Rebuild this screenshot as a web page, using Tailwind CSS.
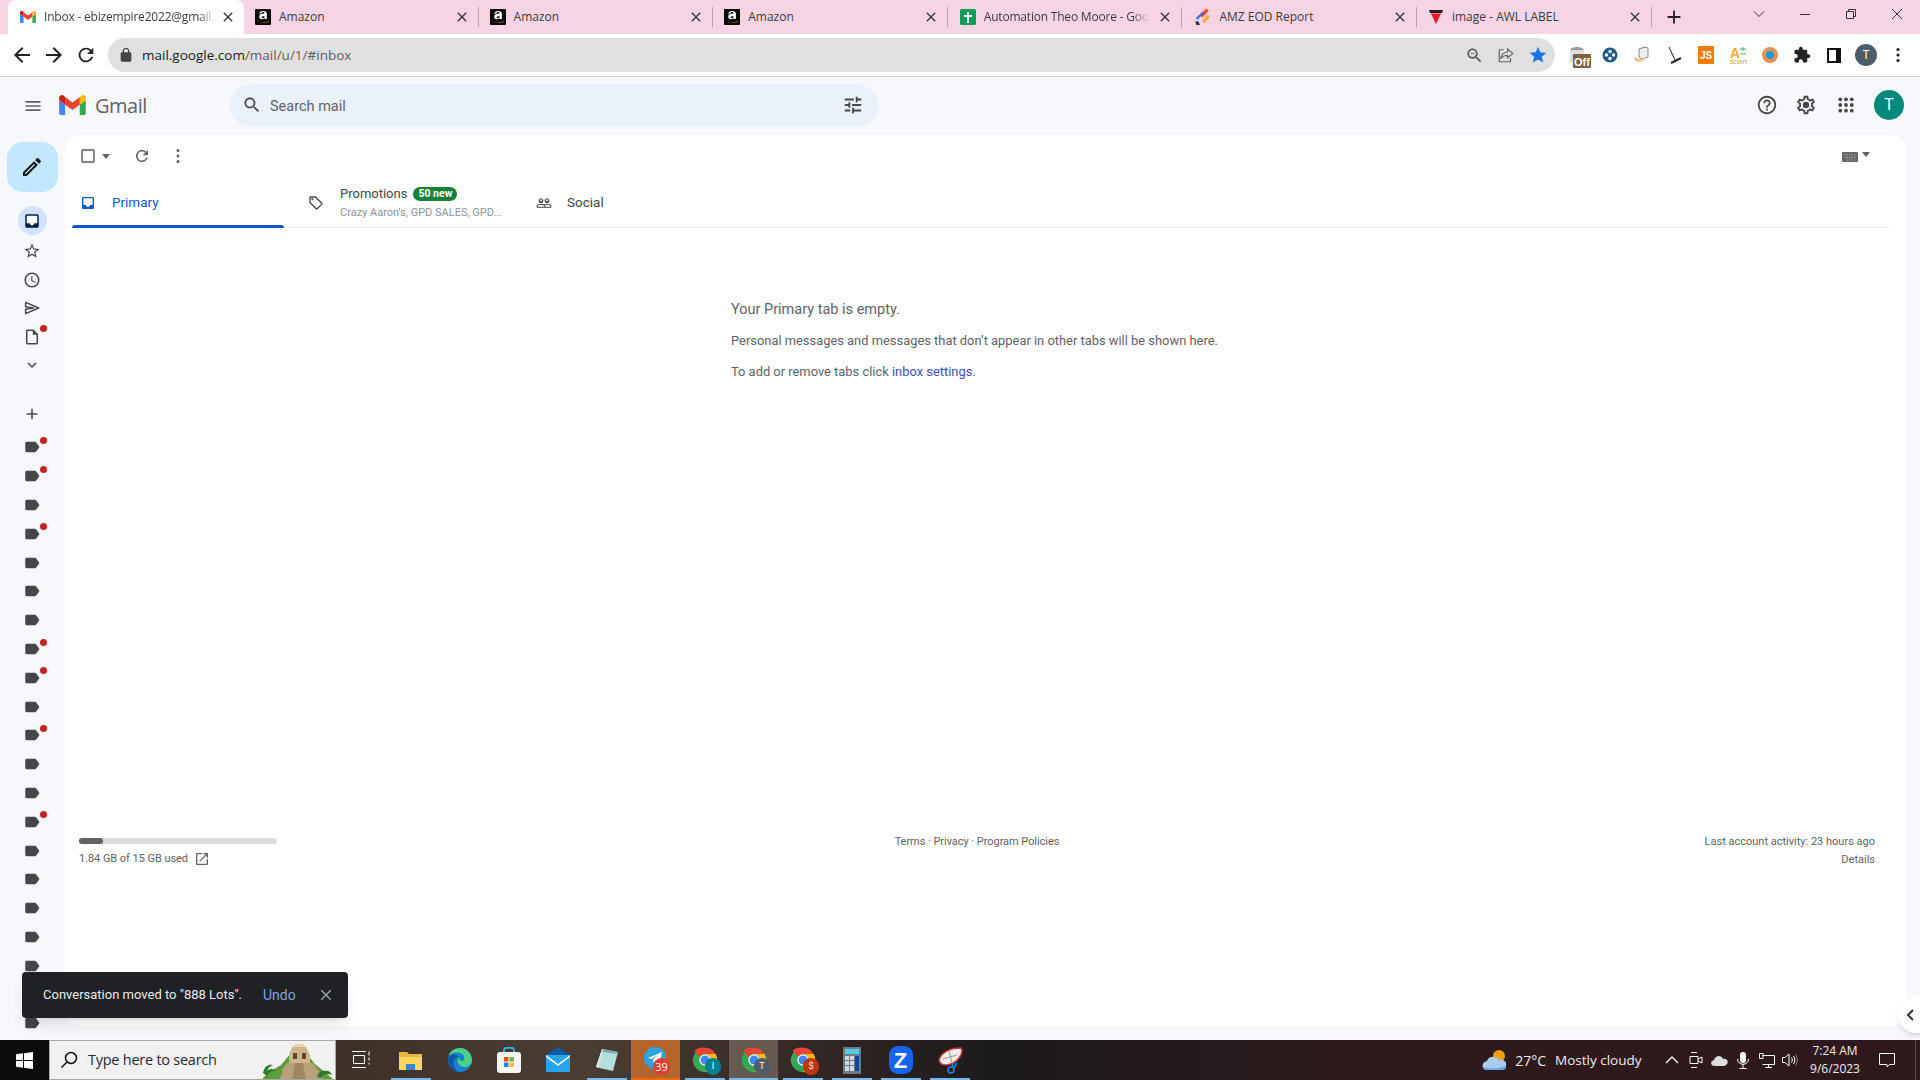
<!DOCTYPE html>
<html lang="en">
<head>
  <meta charset="UTF-8" />
  <title>Inbox - Gmail</title>
  <script src="https://cdn.jsdelivr.net/npm/@tailwindcss/browser@4"></script>
</head>
<body class="w-[1920px] h-[1080px] overflow-hidden flex flex-col relative bg-white font-['Roboto',sans-serif]">

  <!-- shared icons -->
  <svg class="hidden">
    <symbol id="label" viewBox="0 0 24 24"><path d="M17.63 5.84C17.27 5.33 16.67 5 16 5L5 5.01C3.9 5.01 3 5.9 3 7v10c0 1.1.9 1.99 2 1.99L16 19c.67 0 1.27-.33 1.63-.84L22 12l-4.37-6.16z"/></symbol>
    <symbol id="close" viewBox="0 0 24 24"><path d="M19 6.41L17.59 5 12 10.59 6.41 5 5 6.41 10.59 12 5 17.59 6.41 19 12 13.41 17.59 19 19 17.59 13.41 12z"/></symbol>
    <symbol id="amazon" viewBox="0 0 16 16"><rect width="16" height="16" rx="1" fill="#0b0b0b"/><g transform="translate(-2.2 -3.2) scale(1.28)"><path d="M5 6.2c.3-1.5 1.3-2.2 3-2.2 2 0 3 .9 3 2.4v3.9h-1.7l-.2-.8c-.5.7-1.2 1-2 1-1.300 0-2.100-.8-2.100-2 0-1.500 1.200-2.300 4.100-2.400v-.3c0-.6-.4-1-1.100-1-.6 0-1 .3-1.200 1zM9.100 7.900c-1.500.1-2.200.5-2.200 1.100 0 .5.300.7.800.7.800 0 1.400-.5 1.400-1.300z" fill="#fff"/></g><path d="M2.500 12.300c3.500 2 7.500 2 11-.2l-.3 1.900-.6-.9c-3.200 1.500-6.800 1.100-10.100-.8z" fill="#f90"/></symbol>
    <symbol id="chrome" viewBox="0 0 32 32"><circle cx="16" cy="16" r="15" fill="#34a853"/><path d="M16 1a15 15 0 0 1 13 7.500H16a7.500 7.500 0 0 0-6.500 3.750L3 4.800A15 15 0 0 1 16 1z" fill="#ea4335"/><path d="M29 8.500A15 15 0 0 1 16 31l6.500-11.250A7.500 7.500 0 0 0 16 8.500z" fill="#fbbc04"/><circle cx="16" cy="16" r="7" fill="#fff"/><circle cx="16" cy="16" r="5.500" fill="#4285f4"/></symbol>
  </svg>

  <!-- Tab strip -->
  <div class="h-[34px] shrink-0 bg-[#f6d4e4] flex items-stretch text-[12px] text-[#3c3c3c] font-['Open_Sans',sans-serif]">
    <div class="w-[236px] ml-2 bg-white rounded-t-lg flex items-center pl-3 pr-2 gap-[8px]">
      <svg class="w-4 h-4 shrink-0" viewBox="0 0 24 18"><path fill="#4285f4" d="M1.600 18H5.400V8.700L0 4.650V16.400C0 17.300.7 18 1.600 18z"/><path fill="#34a853" d="M18.500 18h3.800c.9 0 1.600-.7 1.600-1.600V4.650l-5.400 4.050"/><path fill="#fbbc04" d="M18.500 1.700v7L24 4.650V2.500C24 .5 21.700-.65 20.100.55"/><path fill="#ea4335" d="M5.400 8.700V1.700L12 6.650l6.500-4.950v7L12 13.600"/><path fill="#c5221f" d="M0 2.500v2.150L5.400 8.700v-7L3.900.55C2.300-.65 0 .5 0 2.500z"/></svg>
      <span class="flex-1 overflow-hidden whitespace-nowrap tracking-[-0.2px] mr-[-4px] mask-r-from-90%">Inbox - ebizempire2022@gmail.com</span>
      <svg class="w-4 h-4 shrink-0 fill-[#333]"><use href="#close"/></svg>
    </div>
    <div class="w-[234.600px] flex items-center pl-[11px] pr-2 gap-[8px] border-r border-[#b8a2ae] my-[7px]">
      <svg class="w-4 h-4 shrink-0"><use href="#amazon"/></svg><span class="flex-1 whitespace-nowrap">Amazon</span><svg class="w-4 h-4 shrink-0 fill-[#333]"><use href="#close"/></svg>
    </div>
    <div class="w-[234.600px] flex items-center pl-[11px] pr-2 gap-[8px] border-r border-[#b8a2ae] my-[7px]">
      <svg class="w-4 h-4 shrink-0"><use href="#amazon"/></svg><span class="flex-1 whitespace-nowrap">Amazon</span><svg class="w-4 h-4 shrink-0 fill-[#333]"><use href="#close"/></svg>
    </div>
    <div class="w-[234.600px] flex items-center pl-[11px] pr-2 gap-[8px] border-r border-[#b8a2ae] my-[7px]">
      <svg class="w-4 h-4 shrink-0"><use href="#amazon"/></svg><span class="flex-1 whitespace-nowrap">Amazon</span><svg class="w-4 h-4 shrink-0 fill-[#333]"><use href="#close"/></svg>
    </div>
    <div class="w-[234.600px] flex items-center pl-[12px] pr-2 gap-[8px] border-r border-[#b8a2ae] my-[7px]">
      <svg class="w-4 h-4 shrink-0" viewBox="0 0 16 16"><rect width="16" height="16" rx="1.500" fill="#0f9d58"/><path d="M7 3h2v3h3v2H9v6H7V8H4V6h3z" fill="#fff"/></svg>
      <span class="flex-1 overflow-hidden whitespace-nowrap tracking-[-0.2px] mask-r-from-90%">Automation Theo Moore - Google Sheets</span><svg class="w-4 h-4 shrink-0 fill-[#333]"><use href="#close"/></svg>
    </div>
    <div class="w-[234.600px] flex items-center pl-[11px] pr-2 gap-[8px] border-r border-[#b8a2ae] my-[7px]">
      <svg class="w-[18px] h-[18px] shrink-0" viewBox="0 0 16 16"><path d="M9 3l3-2.500 2 2-5.500 6-2-2z" fill="#f4511e"/><path d="M2.500 9l6-6 1.500 1.500-6 6z" fill="#3f6fe0"/><path d="M8 11l5-5 2 2-5 5.500z" fill="#fbb03b"/><path d="M2 12h3l1 3H3z" fill="#1b2a5c"/></svg>
      <span class="flex-1 whitespace-nowrap">AMZ EOD Report</span><svg class="w-4 h-4 shrink-0 fill-[#333]"><use href="#close"/></svg>
    </div>
    <div class="w-[234.600px] flex items-center pl-[11px] pr-2 gap-[8px] border-r border-[#b8a2ae] my-[7px]">
      <svg class="w-4 h-4 shrink-0" viewBox="0 0 16 16"><path d="M1 1h14l-1 3H2z" fill="#222"/><path d="M3 4.500h10L8 15z" fill="#e31b23"/></svg>
      <span class="flex-1 whitespace-nowrap">image - AWL LABEL</span><svg class="w-4 h-4 shrink-0 fill-[#333]"><use href="#close"/></svg>
    </div>
    <div class="w-[44px] flex items-center justify-center">
      <svg class="w-[22px] h-[22px] fill-[#222]" viewBox="0 0 24 24"><path d="M19 13h-6v6h-2v-6H5v-2h6V5h2v6h6v2z"/></svg>
    </div>
    <!-- window controls -->
    <div class="ml-auto flex items-start text-[#333]">
      <div class="w-[46px] h-[28px] flex items-center justify-center"><svg class="w-3 h-3 stroke-[#333] fill-none" viewBox="0 0 12 12"><path d="M1 3.500l5 5 5-5"/></svg></div>
      <div class="w-[46px] h-[28px] flex items-center justify-center"><svg class="w-3 h-3 stroke-[#333] fill-none" viewBox="0 0 12 12"><path d="M1 6.500h10"/></svg></div>
      <div class="w-[46px] h-[28px] flex items-center justify-center"><svg class="w-3 h-3 stroke-[#333] fill-none" viewBox="0 0 12 12"><path d="M1.500 3.500h7v7h-7zM3.500 3.500v-2h7v7h-2"/></svg></div>
      <div class="w-[46px] h-[28px] flex items-center justify-center"><svg class="w-3 h-3 stroke-[#333] fill-none" viewBox="0 0 12 12"><path d="M1 1l10 10M11 1L1 11"/></svg></div>
    </div>
  </div>

  <!-- Address bar -->
  <div class="h-[43px] shrink-0 bg-white border-b border-[#d0d0d0] flex items-start pt-[4px] pl-[6px]">
    <div class="w-8 h-[34px] flex items-center justify-center"><svg class="w-6 h-6 fill-[#222]" viewBox="0 0 24 24"><path d="M20 11H7.830l5.590-5.590L12 4l-8 8 8 8 1.410-1.410L7.830 13H20v-2z"/></svg></div>
    <div class="w-8 h-[34px] flex items-center justify-center"><svg class="w-6 h-6 fill-[#222]" viewBox="0 0 24 24"><path d="M12 4l-1.410 1.410L16.170 11H4v2h12.170l-5.580 5.590L12 20l8-8z"/></svg></div>
    <div class="w-8 h-[34px] flex items-center justify-center"><svg class="w-[22px] h-[22px] fill-[#222]" viewBox="0 0 24 24"><path d="M17.650 6.350C16.200 4.900 14.210 4 12 4c-4.420 0-7.990 3.580-7.990 8s3.570 8 7.990 8c3.730 0 6.840-2.550 7.730-6h-2.080c-.82 2.330-3.040 4-5.650 4-3.310 0-6-2.690-6-6s2.690-6 6-6c1.660 0 3.140.69 4.220 1.780L13 11h7V4l-2.350 2.350z"/></svg></div>
    <div class="w-[1447px] ml-[6px] h-[34px] rounded-full bg-[#e0e0e0] flex items-center pl-[10px] pr-[1px] font-['Open_Sans',sans-serif]">
      <svg class="w-4 h-4 fill-[#444]" viewBox="0 0 24 24"><path d="M18 8h-1V6c0-2.760-2.240-5-5-5S7 3.240 7 6v2H6c-1.100 0-2 .9-2 2v10c0 1.100.9 2 2 2h12c1.100 0 2-.9 2-2V10c0-1.100-.9-2-2-2zM9 6c0-1.660 1.340-3 3-3s3 1.340 3 3v2H9V6z"/></svg>
      <span class="ml-2 text-[13.500px] text-[#5f5f5f]"><span class="text-[#222]">mail.google.com</span>/mail/u/1/#inbox</span>
      <div class="ml-auto flex">
        <div class="w-8 h-[34px] flex items-center justify-center"><svg class="w-[19px] h-[19px] fill-[#555]" viewBox="0 0 24 24"><path d="M15.500 14h-.79l-.28-.27C15.410 12.590 16 11.110 16 9.500 16 5.910 13.090 3 9.500 3S3 5.910 3 9.500 5.910 16 9.500 16c1.610 0 3.090-.59 4.230-1.570l.27.28v.79l5 4.990L20.490 19l-4.990-5zm-6 0C7.010 14 5 11.990 5 9.500S7.010 5 9.500 5 14 7.010 14 9.500 11.990 14 9.500 14zM7 9h5v1H7z"/></svg></div>
        <div class="w-8 h-[34px] flex items-center justify-center"><svg class="w-[18px] h-[18px] fill-none stroke-[#666] stroke-[1.600]" viewBox="0 0 24 24"><path d="M14 4l7 6-7 6v-3.500c-4 0-7 1.500-9 4.500 .5-5 3.500-8.500 9-9zM9 5H3v16h15v-5"/></svg></div>
        <div class="w-8 h-[34px] flex items-center justify-center"><svg class="w-[20px] h-[20px] fill-[#1a73e8]" viewBox="0 0 24 24"><path d="M12 17.270L18.180 21l-1.640-7.030L22 9.240l-7.190-.61L12 2 9.190 8.630 2 9.240l5.460 4.730L5.820 21z"/></svg></div>
      </div>
    </div>
    <!-- extensions -->
    <div class="w-[29px] h-[34px] ml-[10px] flex items-center justify-center relative">
      <svg class="w-[22px] h-[24px] mt-[6px]" viewBox="0 0 22 24"><ellipse cx="8" cy="4" rx="7" ry="3" fill="#999"/><path d="M1 4h14v12H1z" fill="#ddd"/><rect x="4" y="8" width="18" height="14" rx="1" fill="#7b6245"/><text x="13" y="19.500" text-anchor="middle" font-size="11" font-weight="700" fill="#fff" font-family="Liberation Sans">Off</text></svg>
    </div>
    <div class="w-8 h-[34px] flex items-center justify-center"><svg class="w-4 h-4" viewBox="0 0 16 16"><circle cx="8" cy="8" r="7.500" fill="#1d5a8c"/><circle cx="8" cy="4.500" r="1.700" fill="#fff"/><circle cx="8" cy="11.500" r="1.700" fill="#fff"/><circle cx="4.500" cy="8" r="1.700" fill="#fff"/><circle cx="11.500" cy="8" r="1.700" fill="#fff"/></svg></div>
    <div class="w-8 h-[34px] flex items-center justify-center"><svg class="w-[18px] h-[18px]" viewBox="0 0 18 18"><path d="M6 3l6-2 3 1v9l-6 2-3-2z" fill="#eee" stroke="#888"/><path d="M1 12c2-1 4 0 6 1l5-1c-1 3-4 4-7 4-2 0-3-1-4-4z" fill="#f2c58f"/></svg></div>
    <div class="w-8 h-[34px] flex items-center justify-center"><svg class="w-[18px] h-[18px] stroke-[#222] fill-none" viewBox="0 0 18 18"><path d="M4 1l6 13" stroke-width="1"/><path d="M6 17l10-5" stroke-width="2"/></svg></div>
    <div class="w-8 h-[34px] flex items-center justify-center"><div class="w-4 h-[18px] bg-[#f57c00] text-white text-[10px] font-bold flex items-center justify-center font-['Liberation_Sans',sans-serif]">JS</div></div>
    <div class="w-8 h-[34px] flex items-center justify-center"><svg class="w-[17px] h-[18px]" viewBox="0 0 17 18"><text x="0" y="12" font-size="14" font-weight="700" fill="#f9a825" font-family="Liberation Sans">A</text><path d="M10 3h6M13 1v4M10 8h6" stroke="#4caf50" stroke-width="1"/><text x="0" y="17.500" font-size="5" font-weight="700" fill="#f9a825" font-family="Liberation Sans">SCOUT</text></svg></div>
    <div class="w-8 h-[34px] flex items-center justify-center"><svg class="w-4 h-4" viewBox="0 0 16 16"><circle cx="8" cy="8" r="8" fill="#e8914f"/><circle cx="8" cy="8" r="4" fill="#1e9bd7"/></svg></div>
    <div class="w-8 h-[34px] flex items-center justify-center"><svg class="w-[18px] h-[18px] fill-[#222]" viewBox="0 0 24 24"><path d="M20.500 11H19V7c0-1.100-.9-2-2-2h-4V3.500C13 2.120 11.880 1 10.500 1S8 2.120 8 3.500V5H4c-1.100 0-1.990.9-1.990 2v3.800H3.500c1.490 0 2.700 1.210 2.700 2.700s-1.210 2.700-2.700 2.700H2V20c0 1.100.9 2 2 2h3.800v-1.500c0-1.490 1.210-2.700 2.700-2.700 1.490 0 2.700 1.210 2.700 2.700V22H17c1.100 0 2-.9 2-2v-4h1.500c1.380 0 2.500-1.120 2.500-2.500S21.880 11 20.500 11z"/></svg></div>
    <div class="w-8 h-[34px] flex items-center justify-center"><div class="w-[14px] h-[15px] border-2 border-[#111] border-r-[5px]"></div></div>
    <div class="w-8 h-[34px] flex items-center justify-center"><div class="w-[22px] h-[22px] rounded-full bg-[#4b5c6b] text-white text-[12px] flex items-center justify-center">T</div></div>
    <div class="w-8 h-[34px] flex items-center justify-center"><svg class="w-[18px] h-[18px] fill-[#222]" viewBox="0 0 18 18"><circle cx="9" cy="3.500" r="1.600"/><circle cx="9" cy="9" r="1.600"/><circle cx="9" cy="14.500" r="1.600"/></svg></div>
  </div>

  <!-- Gmail -->
  <div class="flex-1 min-h-0 bg-[#f6f8fc] flex flex-col">
    <!-- header -->
    <div class="h-[58px] shrink-0 flex items-center pb-[2px]">
      <svg class="w-5 h-5 ml-[23px] mt-[1px] fill-[#5f6368]" viewBox="0 0 24 24"><path d="M3 18h18v-2H3v2zm0-5h18v-2H3v2zm0-7v2h18V6H3z"/></svg>
      <svg class="w-[27px] h-[20px] ml-[16px]" viewBox="0 0 24 18"><path fill="#4285f4" d="M1.600 18H5.400V8.700L0 4.650V16.400C0 17.300.7 18 1.600 18z"/><path fill="#34a853" d="M18.500 18h3.800c.9 0 1.600-.7 1.600-1.600V4.650l-5.400 4.050"/><path fill="#fbbc04" d="M18.500 1.700v7L24 4.650V2.500C24 .5 21.700-.65 20.100.55"/><path fill="#ea4335" d="M5.400 8.700V1.700L12 6.650l6.500-4.950v7L12 13.600"/><path fill="#c5221f" d="M0 2.500v2.150L5.400 8.700v-7L3.900.55C2.300-.65 0 .5 0 2.500z"/></svg>
      <span class="ml-[9px] mt-[2px] w-[135px] text-[20px] text-[#5f6368] font-['Open_Sans',sans-serif] tracking-[-0.5px]">Gmail</span>
      <div class="w-[648px] h-[43px] rounded-full bg-[#eaf1fb] flex items-center pl-[12px] pr-[14px]">
        <svg class="w-5 h-5 fill-[#444746]" viewBox="0 0 24 24"><path d="M15.500 14h-.79l-.28-.27C15.410 12.590 16 11.110 16 9.500 16 5.910 13.090 3 9.500 3S3 5.910 3 9.500 5.910 16 9.500 16c1.610 0 3.090-.59 4.230-1.570l.27.28v.79l5 4.990L20.490 19l-4.990-5zm-6 0C7.010 14 5 11.990 5 9.500S7.010 5 9.500 5 14 7.010 14 9.500 11.990 14 9.500 14z"/></svg>
        <span class="ml-[8px] mt-[3px] text-[14.500px] text-[#5f6368]">Search mail</span>
        <svg class="w-[22px] h-[22px] ml-auto fill-[#444746]" viewBox="0 0 24 24"><path d="M3 17v2h6v-2H3zM3 5v2h10V5H3zm10 16v-2h8v-2h-8v-2h-2v6h2zM7 9v2H3v2h4v2h2V9H7zm14 4v-2H11v2h10zm-6-4h2V7h4V5h-4V3h-2v6z"/></svg>
      </div>
      <div class="ml-auto flex items-center">
        <svg class="w-[22px] h-[22px] fill-[#444746]" viewBox="0 0 24 24"><path d="M11 18h2v-2h-2v2zm1-16C6.480 2 2 6.480 2 12s4.480 10 10 10 10-4.480 10-10S17.520 2 12 2zm0 18c-4.410 0-8-3.590-8-8s3.590-8 8-8 8 3.590 8 8-3.590 8-8 8zm0-14c-2.210 0-4 1.790-4 4h2c0-1.100.9-2 2-2s2 .9 2 2c0 2-3 1.750-3 5h2c0-2.250 3-2.500 3-5 0-2.210-1.790-4-4-4z"/></svg>
        <svg class="w-[22px] h-[22px] ml-[17px] fill-[#444746]" viewBox="0 0 24 24"><path d="M19.430 12.980c.04-.32.07-.64.07-.98 0-.34-.03-.66-.07-.98l2.110-1.650c.19-.15.24-.42.12-.64l-2-3.460c-.09-.16-.26-.25-.44-.25-.06 0-.12.01-.17.03l-2.490 1c-.52-.4-1.080-.73-1.690-.98l-.38-2.650C14.460 2.180 14.250 2 14 2h-4c-.25 0-.46.18-.49.42l-.38 2.650c-.61.25-1.170.59-1.690.98l-2.490-1c-.06-.02-.12-.03-.18-.03-.17 0-.34.09-.43.25l-2 3.460c-.13.22-.07.49.12.64l2.110 1.650c-.04.32-.07.65-.07.98 0 .33.03.66.07.98l-2.110 1.650c-.19.15-.24.42-.12.64l2 3.460c.09.16.26.25.44.25.06 0 .12-.01.17-.03l2.490-1c.52.4 1.080.73 1.690.98l.38 2.650c.03.24.24.42.49.42h4c.25 0 .46-.18.49-.42l.38-2.650c.61-.25 1.170-.59 1.690-.98l2.490 1c.06.02.12.03.18.03.17 0 .34-.09.43-.25l2-3.460c.12-.22.07-.49-.12-.64l-2.110-1.650zm-1.980-1.710c.04.31.05.52.05.73 0 .21-.02.43-.05.73l-.14 1.130.89.7 1.080.84-.7 1.210-1.270-.51-1.040-.42-.9.68c-.43.32-.84.56-1.250.73l-1.060.43-.16 1.130-.2 1.350h-1.400l-.19-1.350-.16-1.130-1.060-.43c-.43-.18-.83-.41-1.230-.71l-.91-.7-1.060.43-1.270.51-.7-1.210 1.080-.84.89-.7-.14-1.130c-.03-.31-.05-.54-.05-.74s.02-.43.05-.73l.14-1.130-.89-.7-1.080-.84.7-1.210 1.270.51 1.040.42.9-.68c.43-.32.84-.56 1.250-.73l1.060-.43.16-1.130.2-1.350h1.390l.19 1.350.16 1.130 1.060.43c.43.18.83.41 1.230.71l.91.7 1.060-.43 1.270-.51.7 1.210-1.070.85-.89.7.14 1.130z"/><circle cx="12" cy="12" r="3.500"/></svg>
        <svg class="w-[18px] h-[18px] ml-[20px] fill-[#444746]" viewBox="0 0 22 22"><circle cx="4" cy="4" r="2.300"/><circle cx="11" cy="4" r="2.300"/><circle cx="18" cy="4" r="2.300"/><circle cx="4" cy="11" r="2.300"/><circle cx="11" cy="11" r="2.300"/><circle cx="18" cy="11" r="2.300"/><circle cx="4" cy="18" r="2.300"/><circle cx="11" cy="18" r="2.300"/><circle cx="18" cy="18" r="2.300"/></svg>
        <div class="w-[30px] h-[30px] ml-[19px] mr-[16px] rounded-full bg-[#00897b] text-white text-[16px] flex items-center justify-center">T</div>
      </div>
    </div>

    <div class="flex-1 min-h-0 flex">
      <!-- sidebar -->
      <div class="w-[65px] shrink-0 overflow-hidden flex flex-col items-center pr-[1px] text-[#444746]">
        <div class="w-[51px] h-[50px] mt-[7px] rounded-2xl bg-[#c2e7ff] flex items-center justify-center">
          <svg class="w-6 h-6 fill-[#111]" viewBox="0 0 24 24"><path d="M3 17.250V21h3.750L17.810 9.940l-3.750-3.750L3 17.250zM5.920 19H5v-.92l9.060-9.060.92.92L5.920 19zM20.710 5.630l-2.340-2.340c-.2-.2-.45-.29-.71-.29s-.51.1-.7.29l-1.830 1.830 3.750 3.750 1.830-1.830c.39-.39.39-1.020 0-1.410z"/></svg>
        </div>
        <div class="w-[29px] h-[29px] mt-[14px] rounded-full bg-[#d3e3fd] flex items-center justify-center">
          <svg class="w-[18px] h-[18px] fill-[#041e49]" viewBox="0 0 24 24"><rect x="4" y="4" width="16" height="12" fill="#fff"/><path d="M19 3H4.990C3.880 3 3 3.900 3 5l.01 14c0 1.100.88 2 1.990 2h14c1.100 0 2-.9 2-2V5c0-1.100-.9-2-2-2zm0 12h-4c0 1.660-1.350 3-3 3s-3-1.340-3-3H4.990V5H19v10z"/></svg>
        </div>
        <div class="h-[28.500px] w-full flex items-center justify-center mt-[2px]"><svg class="w-[18px] h-[18px] fill-[#444746]" viewBox="0 0 24 24"><path d="M22 9.240l-7.190-.62L12 2 9.190 8.630 2 9.240l5.460 4.730L5.820 21 12 17.270 18.180 21l-1.630-7.030L22 9.240zM12 15.400l-3.760 2.270 1-4.280-3.320-2.880 4.380-.38L12 6.100l1.710 4.040 4.380.38-3.320 2.880 1 4.280L12 15.400z"/></svg></div>
        <div class="h-[28.500px] w-full flex items-center justify-center"><svg class="w-[18px] h-[18px] fill-[#444746]" viewBox="0 0 24 24"><path d="M11.990 2C6.470 2 2 6.480 2 12s4.470 10 9.990 10C17.520 22 22 17.520 22 12S17.520 2 11.990 2zM12 20c-4.420 0-8-3.580-8-8s3.580-8 8-8 8 3.580 8 8-3.580 8-8 8zm.5-13H11v6l5.250 3.150.75-1.230-4.500-2.670z"/></svg></div>
        <div class="h-[28.500px] w-full flex items-center justify-center"><svg class="w-[18px] h-[18px] fill-none stroke-[#444746] stroke-2" viewBox="0 0 24 24"><path stroke-linejoin="round" d="M3.500 4.500L21 12 3.500 19.500v-5.700L14 12 3.500 10.200z"/></svg></div>
        <div class="h-[28.500px] w-full flex items-center justify-center relative"><svg class="w-[18px] h-[18px] fill-[#444746]" viewBox="0 0 24 24"><path d="M14 2H6c-1.100 0-2 .9-2 2v16c0 1.100.9 2 2 2h12c1.100 0 2-.9 2-2V8l-6-6zM6 20V4h7v5h5v11H6z"/></svg><span class="absolute left-[40px] top-[2px] w-[7px] h-[7px] rounded-full bg-[#c5221f]"></span></div>
        <div class="h-[28.500px] w-full flex items-center justify-center"><svg class="w-[18px] h-[18px] fill-[#444746]" viewBox="0 0 24 24"><path d="M16.590 8.590L12 13.170 7.410 8.590 6 10l6 6 6-6z"/></svg></div>
        <div class="h-[28.500px] w-full flex items-center justify-center mt-[20px]"><svg class="w-[18px] h-[18px] fill-[#444746]" viewBox="0 0 24 24"><path d="M19 13h-6v6h-2v-6H5v-2h6V5h2v6h6v2z"/></svg></div>

        <div class="relative h-[28.800px] w-full flex items-center justify-center mt-[5px] shrink-0"><svg class="w-[18px] h-[18px] fill-[#444746]"><use href="#label"/></svg><span class="absolute left-[40px] top-[4px] w-[7px] h-[7px] rounded-full bg-[#c5221f]"></span></div>
        <div class="relative h-[28.800px] w-full flex items-center justify-center shrink-0"><svg class="w-[18px] h-[18px] fill-[#444746]"><use href="#label"/></svg><span class="absolute left-[40px] top-[4px] w-[7px] h-[7px] rounded-full bg-[#c5221f]"></span></div>
        <div class="relative h-[28.800px] w-full flex items-center justify-center shrink-0"><svg class="w-[18px] h-[18px] fill-[#444746]"><use href="#label"/></svg></div>
        <div class="relative h-[28.800px] w-full flex items-center justify-center shrink-0"><svg class="w-[18px] h-[18px] fill-[#444746]"><use href="#label"/></svg><span class="absolute left-[40px] top-[4px] w-[7px] h-[7px] rounded-full bg-[#c5221f]"></span></div>
        <div class="relative h-[28.800px] w-full flex items-center justify-center shrink-0"><svg class="w-[18px] h-[18px] fill-[#444746]"><use href="#label"/></svg></div>
        <div class="relative h-[28.800px] w-full flex items-center justify-center shrink-0"><svg class="w-[18px] h-[18px] fill-[#444746]"><use href="#label"/></svg></div>
        <div class="relative h-[28.800px] w-full flex items-center justify-center shrink-0"><svg class="w-[18px] h-[18px] fill-[#444746]"><use href="#label"/></svg></div>
        <div class="relative h-[28.800px] w-full flex items-center justify-center shrink-0"><svg class="w-[18px] h-[18px] fill-[#444746]"><use href="#label"/></svg><span class="absolute left-[40px] top-[4px] w-[7px] h-[7px] rounded-full bg-[#c5221f]"></span></div>
        <div class="relative h-[28.800px] w-full flex items-center justify-center shrink-0"><svg class="w-[18px] h-[18px] fill-[#444746]"><use href="#label"/></svg><span class="absolute left-[40px] top-[4px] w-[7px] h-[7px] rounded-full bg-[#c5221f]"></span></div>
        <div class="relative h-[28.800px] w-full flex items-center justify-center shrink-0"><svg class="w-[18px] h-[18px] fill-[#444746]"><use href="#label"/></svg></div>
        <div class="relative h-[28.800px] w-full flex items-center justify-center shrink-0"><svg class="w-[18px] h-[18px] fill-[#444746]"><use href="#label"/></svg><span class="absolute left-[40px] top-[4px] w-[7px] h-[7px] rounded-full bg-[#c5221f]"></span></div>
        <div class="relative h-[28.800px] w-full flex items-center justify-center shrink-0"><svg class="w-[18px] h-[18px] fill-[#444746]"><use href="#label"/></svg></div>
        <div class="relative h-[28.800px] w-full flex items-center justify-center shrink-0"><svg class="w-[18px] h-[18px] fill-[#444746]"><use href="#label"/></svg></div>
        <div class="relative h-[28.800px] w-full flex items-center justify-center shrink-0"><svg class="w-[18px] h-[18px] fill-[#444746]"><use href="#label"/></svg><span class="absolute left-[40px] top-[4px] w-[7px] h-[7px] rounded-full bg-[#c5221f]"></span></div>
        <div class="relative h-[28.800px] w-full flex items-center justify-center shrink-0"><svg class="w-[18px] h-[18px] fill-[#444746]"><use href="#label"/></svg></div>
        <div class="relative h-[28.800px] w-full flex items-center justify-center shrink-0"><svg class="w-[18px] h-[18px] fill-[#444746]"><use href="#label"/></svg></div>
        <div class="relative h-[28.800px] w-full flex items-center justify-center shrink-0"><svg class="w-[18px] h-[18px] fill-[#444746]"><use href="#label"/></svg></div>
        <div class="relative h-[28.800px] w-full flex items-center justify-center shrink-0"><svg class="w-[18px] h-[18px] fill-[#444746]"><use href="#label"/></svg></div>
        <div class="relative h-[28.800px] w-full flex items-center justify-center shrink-0"><svg class="w-[18px] h-[18px] fill-[#444746]"><use href="#label"/></svg></div>
        <div class="relative h-[28.800px] w-full flex items-center justify-center shrink-0"><svg class="w-[18px] h-[18px] fill-[#444746]"><use href="#label"/></svg></div>
        <div class="relative h-[28.800px] w-full flex items-center justify-center shrink-0"><svg class="w-[18px] h-[18px] fill-[#444746]"><use href="#label"/></svg></div>
      </div>

      <!-- mail card -->
      <div class="flex-1 min-w-0 mr-[14px] mb-[14px] bg-white rounded-2xl flex flex-col">
        <div class="h-[44px] shrink-0 flex items-center pl-[14px] pr-[36px] pb-[2px]">
          <svg class="w-[18px] h-[18px] fill-[#5f6368]" viewBox="0 0 24 24"><path d="M19 5v14H5V5h14m0-2H5c-1.100 0-2 .9-2 2v14c0 1.100.9 2 2 2h14c1.100 0 2-.9 2-2V5c0-1.100-.9-2-2-2z"/></svg>
          <svg class="w-[8px] h-[5px] ml-[5px] fill-[#5f6368]" viewBox="0 0 8 5"><path d="M0 0h8L4 5z"/></svg>
          <svg class="w-[18px] h-[18px] ml-[23px] fill-[#5f6368]" viewBox="0 0 24 24"><path d="M17.650 6.350C16.200 4.900 14.210 4 12 4c-4.420 0-7.990 3.580-7.990 8s3.570 8 7.990 8c3.730 0 6.840-2.550 7.730-6h-2.080c-.82 2.330-3.040 4-5.650 4-3.310 0-6-2.690-6-6s2.690-6 6-6c1.660 0 3.140.69 4.220 1.780L13 11h7V4l-2.350 2.350z"/></svg>
          <svg class="w-[18px] h-[18px] ml-[18px] fill-[#5f6368]" viewBox="0 0 18 18"><circle cx="9" cy="3.500" r="1.500"/><circle cx="9" cy="9" r="1.500"/><circle cx="9" cy="14.500" r="1.500"/></svg>
          <svg class="w-[16px] h-[10px] ml-auto mt-[1px]" viewBox="0 0 16 10"><rect width="16" height="10" rx="1" fill="#666"/><path d="M2 3h12M2 5.500h12M4 8h8" stroke="#aaa" stroke-width="1" stroke-dasharray="1.500 1"/></svg>
          <svg class="w-[8px] h-[5px] ml-[4px] mb-[4px] fill-[#5f6368]" viewBox="0 0 8 5"><path d="M0 0h8L4 5z"/></svg>
        </div>

        <!-- category tabs -->
        <div class="h-[49px] shrink-0 mx-[7px] mr-[14px] border-b border-[#f0f0f0] flex items-stretch">
          <div class="w-[212px] relative flex items-center pl-[8px] gap-[16px] pb-[1px] text-[#0b57d0] text-[13.500px] font-normal">
            <svg class="w-4 h-4 fill-[#0b57d0]" viewBox="0 0 24 24"><path d="M19 3H4.990C3.880 3 3 3.900 3 5l.01 14c0 1.100.88 2 1.990 2h14c1.100 0 2-.9 2-2V5c0-1.100-.9-2-2-2zm0 12h-4c0 1.660-1.350 3-3 3s-3-1.340-3-3H4.990V5H19v10z"/></svg>
            <span>Primary</span>
            <span class="absolute left-0 right-0 bottom-[-1px] h-[3px] rounded-t-[3px] bg-[#0b57d0]"></span>
          </div>
          <div class="w-[228px] flex items-center pl-[24px] gap-[16px] pb-[1px]">
            <svg class="w-4 h-4 fill-[#444746]" viewBox="0 0 24 24"><path d="M21.410 11.580l-9-9C12.050 2.220 11.550 2 11 2H4c-1.100 0-2 .9-2 2v7c0 .55.22 1.050.59 1.420l9 9c.36.36.86.58 1.410.58.55 0 1.050-.22 1.410-.59l7-7c.37-.36.59-.86.59-1.410 0-.55-.23-1.060-.59-1.420zM13 20.010L4 11V4h7v-.01l9 9-7 7.020z"/><circle cx="6.500" cy="6.500" r="1.500"/></svg>
            <div class="flex flex-col mt-[3px]">
              <div class="flex items-center h-[17px]">
                <span class="text-[13px] text-[#444746]">Promotions</span>
                <span class="ml-[6px] h-[14px] px-[5px] rounded-full bg-[#188038] text-white text-[10.500px] font-bold leading-[14px]">50 new</span>
              </div>
              <span class="text-[11px] leading-[20px] text-[#8f9499] whitespace-nowrap">Crazy Aaron's, GPD SALES, GPD...</span>
            </div>
          </div>
          <div class="w-[212px] flex items-center pl-[24px] gap-[15px] pb-[1px] text-[13.500px] text-[#444746]">
            <svg class="w-4 h-4 fill-[#444746]" viewBox="0 0 24 24"><path d="M16.500 13c-1.200 0-3.070.34-4.500 1-1.430-.67-3.300-1-4.500-1C5.330 13 1 14.080 1 16.250V19h22v-2.750c0-2.170-4.330-3.250-6.500-3.250zm-4 4.500h-10v-1.250c0-.54 2.560-1.750 5-1.750s5 1.210 5 1.750v1.250zm9 0H14v-1.250c0-.46-.2-.86-.52-1.220.88-.3 1.960-.53 3.020-.53 2.440 0 5 1.210 5 1.750v1.250zM7.500 12c1.930 0 3.500-1.570 3.500-3.500S9.430 5 7.500 5 4 6.570 4 8.500 5.570 12 7.500 12zm0-5.500c.83 0 1.500.67 1.500 1.500s-.67 1.500-1.500 1.500S6 8.830 6 8 6.670 6.500 7.500 6.500zm9 5.500c1.930 0 3.500-1.570 3.500-3.500S18.430 5 16.500 5 13 6.570 13 8.500s1.570 3.500 3.500 3.500zm0-5.500c.83 0 1.500.67 1.500 1.500s-.67 1.500-1.500 1.500S15 8.830 15 8s.67-1.500 1.500-1.500z"/></svg>
            <span>Social</span>
          </div>
        </div>

        <!-- empty state -->
        <div class="ml-[666px] mt-[72px] text-[#5f6368]">
          <p class="text-[14.500px] leading-[20px]">Your Primary tab is empty.</p>
          <p class="text-[12.900px] leading-[20px] mt-[11px]">Personal messages and messages that don’t appear in other tabs will be shown here.</p>
          <p class="text-[12.900px] leading-[20px] mt-[11px]">To add or remove tabs click <a class="text-[#3c4fc9]">inbox settings</a>.</p>
        </div>

        <!-- footer -->
        <div class="mt-auto mb-[158px] pl-[14px] pr-[31px] grid grid-cols-[1fr_auto_1fr] text-[11px] leading-[16px] text-[#5f6368]">
          <div>
            <div class="w-[198px] h-[6px] mt-[4px] rounded-full bg-[#dadce0]"><div class="h-full rounded-full bg-[#5f6368]" style="width: 12.300%"></div></div>
            <div class="flex items-center h-[16px] mt-[7px]">
              <span class="tracking-[-0.05px]">1.84 GB of 15 GB used</span>
              <svg class="w-[16px] h-[16px] ml-[6px] fill-[#5f6368]" viewBox="0 0 24 24"><path d="M19 19H5V5h7V3H5c-1.110 0-2 .9-2 2v14c0 1.100.89 2 2 2h14c1.100 0 2-.9 2-2v-7h-2v7zM14 3v2h3.590l-9.830 9.830 1.410 1.410L19 6.410V10h2V3h-7z"/></svg>
            </div>
          </div>
          <div class="tracking-[-0.05px]">Terms · Privacy · Program Policies</div>
          <div class="text-right">
            <div>Last account activity: 23 hours ago</div>
            <div class="mt-[2px]">Details</div>
          </div>
        </div>
      </div>
    </div>
  </div>

  <!-- Taskbar -->
  <div class="h-[40px] shrink-0 flex items-stretch bg-[linear-gradient(90deg,#0a0a0a_0%,#3f3028_18%,#4a3e34_30%,#2d2221_45%,#1c1a1b_52%,#2e1a1c_72%,#2f181b_100%)] text-white">
    <div class="w-[49px] bg-[#0b0b0b] flex items-center justify-center">
      <svg class="w-[17px] h-[17px] fill-white" viewBox="0 0 17 17"><path d="M0 2.300l7-1v6.800H0zM8 1.200L17 0v8.100H8zM0 9h7v6.800l-7-1zM8 9h9v8l-9-1.200z"/></svg>
    </div>
    <div class="w-[287px] bg-[#f1f1f1] border border-[#a9a9a9] flex items-center pl-[10px] relative overflow-hidden">
      <svg class="w-[18px] h-[18px] fill-none stroke-[#111] stroke-[1.500]" viewBox="0 0 18 18"><circle cx="11" cy="7" r="5.500"/><path d="M7 11l-5.500 5.500"/></svg>
      <span class="ml-[10px] text-[14.500px] text-[#1e2c3a] font-['Open_Sans',sans-serif] tracking-[-0.25px]">Type here to search</span>
      <svg class="absolute right-0 top-[2px] w-[76px] h-[38px]" viewBox="0 0 76 38"><path d="M2 38c5-8 14-12 20-16L32 10l14-1 10 12 18 15v2z" fill="#5d9c3a"/><path d="M30 12l3-8h14l4 8v8H30z" fill="#cdb68a"/><path d="M33 4l3-3h8l3 3z" fill="#e3d3ab"/><path d="M34 10h4v6h-4zM43 10h4v6h-4z" fill="#5a4a32"/><path d="M28 20h26l6 8H22zM24 28h36l5 10H20z" fill="#b9a079"/><path d="M36 20h8l3 18H33z" fill="#9d8660"/><path d="M4 30c2-8 6-9 10-8-3 1-5 3-6 6 3-3 7-2 9 0-4 0-7 1-9 5z" fill="#2f7a2c"/><path d="M58 34c2-6 5-7 8-6 3-1 6 1 7 4-4-2-9-1-11 3z" fill="#2f7a2c"/></svg>
    </div>
    <div class="w-[50px] flex items-center justify-center">
      <svg class="w-[20px] h-[18px] stroke-white fill-none" viewBox="0 0 20 18"><path d="M1 .5h14M2.500 4.500h11v8h-11zM1 16.500h14M18 .5v4M18 6.500v3M18 12v1.500"/></svg>
    </div>
    <div class="w-[49px] relative flex items-center justify-center">
      <svg class="w-[23px] h-[20px]" viewBox="0 0 23 20"><path d="M0 2h8l2 2h13v16H0z" fill="#e8b93f"/><path d="M0 7h23v13H0z" fill="#fbd75b"/><path d="M7 14h9v6H7z" fill="#3a86c8"/></svg>
      <span class="absolute left-[5px] right-[4px] bottom-0 h-[2px] bg-[#76b9ed]"></span>
    </div>
    <div class="w-[49px] flex items-center justify-center">
      <svg class="w-6 h-6" viewBox="0 0 24 24"><circle cx="12" cy="12" r="12" fill="#1a7fd1"/><path d="M24 13c0-7-5-13-12-13C6 0 1 4 .5 9c2-4 6-5 10-4.500 4 .5 7 4 5.500 8-2 .5-5 0-5-3-3 3-1 9 5 9.500 4 .3 8-2.500 8-6.500z" fill="#4fd08a"/><path d="M.5 9c-1.500 7 3 14 11 15-4-2-6.500-5.500-6-10C6 10 8 9 10.500 9 7 5 2 6 .5 9z" fill="#0c59a4"/></svg>
    </div>
    <div class="w-[49px] relative flex items-center justify-center">
      <svg class="w-6 h-[26px]" viewBox="0 0 24 26"><path d="M7 6V3c0-2 2-2.500 5-2.500S17 1 17 3v3" fill="none" stroke="#29b6f6" stroke-width="2"/><rect y="5" width="24" height="21" rx="3" fill="#f5f5f5"/><rect x="7" y="10" width="4.500" height="4.500" fill="#e8501f"/><rect x="12.500" y="10" width="4.500" height="4.500" fill="#7cb342"/><rect x="7" y="15.500" width="4.500" height="4.500" fill="#1e88e5"/><rect x="12.500" y="15.500" width="4.500" height="4.500" fill="#fbc02d"/></svg>
    </div>
    <div class="w-[49px] flex items-center justify-center">
      <svg class="w-6 h-[26px]" viewBox="0 0 24 26"><path d="M12 0l12 8v17H0V8z" fill="#0f5ca8"/><path d="M0 8h24v17H0z" fill="#27a5ec"/><path d="M0 8l12 9 12-9v2l-12 9L0 10z" fill="#fff"/></svg>
    </div>
    <div class="w-[49px] relative flex items-center justify-center">
      <svg class="w-[24px] h-[26px]" viewBox="0 0 24 26"><path d="M7 2l16 3-5 19L1 20z" fill="#b6ddde"/><path d="M1 20l6-18 1 1-5 17 15 4z" fill="#e6e6e6"/><path d="M8 2l15 3v2L7 5z" fill="#7fa8aa"/></svg>
      <span class="absolute left-[5px] right-[4px] bottom-0 h-[2px] bg-[#76b9ed]"></span>
    </div>
    <div class="w-[49px] relative flex items-center justify-center bg-[#b5652b]">
      <svg class="w-[28px] h-[28px] ml-[2px]" viewBox="0 0 28 28"><circle cx="12" cy="12" r="11" fill="#2aa5de"/><path d="M5 12l14-6-2.500 12-4-3-2 2-.5-3.500 5-4.500-6.500 4z" fill="#fff"/></svg>
      <span class="absolute left-[22px] top-[18px] w-[17px] h-[17px] rounded-full bg-[#e53935] text-white text-[11px] leading-[17px] text-center font-['Open_Sans',sans-serif]">39</span>
      <span class="absolute left-0 right-0 bottom-0 h-[2px] bg-[#f76b00]"></span>
    </div>
    <div class="w-[49px] relative flex items-center justify-center">
      <svg class="w-[26px] h-[26px]"><use href="#chrome"/></svg>
      <span class="absolute left-[25px] top-[18px] w-[16px] h-[17px] rounded-full bg-[#00838f] text-white text-[9px] leading-[17px] text-center">I</span>
      <span class="absolute left-[5px] right-[4px] bottom-0 h-[2px] bg-[#76b9ed]"></span>
    </div>
    <div class="w-[49px] relative flex items-center justify-center bg-[#665a50]">
      <svg class="w-[26px] h-[26px]"><use href="#chrome"/></svg>
      <span class="absolute left-[25px] top-[18px] w-[16px] h-[17px] rounded-full bg-[#4b5c6b] text-white text-[9px] leading-[17px] text-center">T</span>
      <span class="absolute left-0 right-0 bottom-0 h-[2px] bg-[#76b9ed]"></span>
    </div>
    <div class="w-[49px] relative flex items-center justify-center">
      <svg class="w-[26px] h-[26px]"><use href="#chrome"/></svg>
      <span class="absolute left-[25px] top-[18px] w-[16px] h-[17px] rounded-full bg-[#bf360c] text-white text-[9px] leading-[17px] text-center">$</span>
      <span class="absolute left-[5px] right-[4px] bottom-0 h-[2px] bg-[#76b9ed]"></span>
    </div>
    <div class="w-[49px] relative flex items-center justify-center">
      <svg class="w-[18px] h-[27px]" viewBox="0 0 18 27"><rect width="18" height="27" rx="1" fill="#6f7b84"/><rect x="2" y="2" width="14" height="5" fill="#4dd0e1"/><path d="M2 9h4v4H2zM7 9h4v4H7zM2 14h4v4H2zM7 14h4v4H7zM2 19h4v5H2zM7 19h4v5H7z" fill="#cfd8dc"/><path d="M12 9h4v15h-4z" fill="#0d47a1"/></svg>
      <span class="absolute left-[5px] right-[4px] bottom-0 h-[2px] bg-[#76b9ed]"></span>
    </div>
    <div class="w-[49px] relative flex items-center justify-center">
      <div class="w-[24px] h-[28px] rounded-[9px] bg-[#1565f0] flex items-center justify-center text-white text-[22px] font-bold font-['Liberation_Sans',sans-serif]">Z</div>
      <span class="absolute left-[5px] right-[4px] bottom-0 h-[2px] bg-[#76b9ed]"></span>
    </div>
    <div class="w-[49px] relative flex items-center justify-center">
      <svg class="w-[26px] h-[27px]" viewBox="0 0 26 27"><path d="M2 13C4 6 12 1 24 1c3 4-2 15-14 17-4 .5-7-1-8-5z" fill="#eee" stroke="#c33" stroke-width="1.500"/><path d="M12 4l3 12M6 12l14-4" stroke="#999" fill="none"/><circle cx="14" cy="23" r="3" fill="none" stroke="#1e88e5" stroke-width="1.500"/><path d="M15 20l2-5M17 21l3-5" stroke="#1e88e5" stroke-width="1.500"/></svg>
      <span class="absolute left-[5px] right-[4px] bottom-0 h-[2px] bg-[#76b9ed]"></span>
    </div>

    <!-- system tray -->
    <div class="ml-auto flex items-center font-['Open_Sans',sans-serif] text-[#eee]">
      <svg class="w-[26px] h-[24px]" viewBox="0 0 26 24"><circle cx="17" cy="8" r="6" fill="#f39c12"/><path d="M5 22c-6 0-6-8 0-9 1-5 9-6 12-1 5-1 8 2 7 6 0 3-2 4-4 4z" fill="#a8cdf0"/><path d="M1 19c6 2 16 2 23-1 0 3-2 4-4 4H5c-2 0-3-1-4-3z" fill="#6aa5df"/></svg>
      <span class="ml-[7px] text-[14px]">27°C</span>
      <span class="ml-[9px] text-[13.500px] w-[92px] whitespace-nowrap">Mostly cloudy</span>
      <svg class="w-[14px] h-[14px] ml-[18px] stroke-white fill-none stroke-[1.300]" viewBox="0 0 14 14"><path d="M1 10l6-6 6 6"/></svg>
      <svg class="w-[14px] h-[16px] ml-[10px] stroke-white fill-none" viewBox="0 0 14 16"><path d="M2 .5h6M2 15.500h6M1 4.500h8v7H1zM9 7l4-2v6l-4-2"/></svg>
      <svg class="w-[17px] h-[11px] ml-[8px] fill-[#ddd]" viewBox="0 0 17 11"><path d="M4 11c-5 0-5-5-1-6 1-4 7-6 9-1 4-1 6 3 4 5-1 1-2 2-3 2z"/></svg>
      <svg class="w-[14px] h-[17px] ml-[8px]" viewBox="0 0 14 17"><rect x="4" y="0" width="6" height="11" rx="3" fill="#fff"/><path d="M1.500 7c0 7 11 7 11 0M7 12v4M3.500 16.500h7" stroke="#fff" fill="none"/></svg>
      <svg class="w-[16px] h-[15px] ml-[9px] stroke-white fill-none" viewBox="0 0 16 15"><path d="M3.500 2.500H15.500v9H3.500M.5.500h3.500v5H.5zM9.500 11.500v3M6 14.500h7"/></svg>
      <svg class="w-[16px] h-[14px] ml-[7px] stroke-white fill-none" viewBox="0 0 16 14"><path d="M.5 4.500h2.500l4-3.500v12L3 9.500H.5zM9.500 4.500c1 1.500 1 3.500 0 5M11.500 3c1.700 2.500 1.700 5.500 0 8"/><path d="M13.500 1.500c2.300 3.500 2.300 7.500 0 11" stroke="#888"/></svg>
      <div class="w-[66px] ml-[4px] text-[12px] leading-[18px] text-center whitespace-nowrap">
        <div>7:24 AM</div>
        <div>9/6/2023</div>
      </div>
      <svg class="w-[16px] h-[16px] ml-[11px] stroke-white fill-none" viewBox="0 0 16 16"><path d="M.5 1.500h15v11h-5l-2.500 2.500v-2.500H.5z"/></svg>
      <div class="w-[5px] h-full ml-[20px] border-l border-[#5a4a4c]"></div>
    </div>
  </div>

  <!-- snackbar -->
  <div class="absolute left-[22px] top-[972px] w-[326px] h-[46px] rounded-[4px] bg-[#202124] shadow-lg flex items-center pl-[21px] text-[13px] text-[#e8eaed]">
    <span class="w-[220px] whitespace-nowrap">Conversation moved to "888 Lots".</span>
    <span class="text-[14px] text-[#7aa5e4]">Undo</span>
    <svg class="w-[18px] h-[18px] ml-[21px] fill-[#9aa0a6]"><use href="#close"/></svg>
  </div>

  <!-- side panel toggle -->
  <div class="absolute left-[1898px] top-[997px] w-[36px] h-[36px] rounded-full bg-white shadow-md flex items-center pl-[8px]">
    <svg class="w-[10px] h-[12px] stroke-[#333] fill-none stroke-2" viewBox="0 0 10 12"><path d="M7 1L2 6l5 5"/></svg>
  </div>
</body>
</html>
